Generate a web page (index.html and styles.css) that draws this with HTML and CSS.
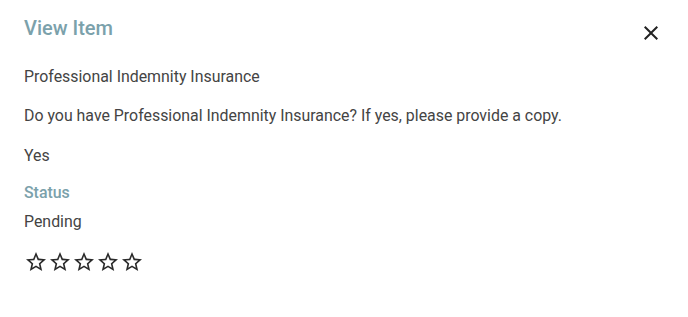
FILE: index.html
```html
<!DOCTYPE html>
<html>
<head>
<meta charset="utf-8">
<link rel="stylesheet" href="styles.css">
</head>
<body>
<div class="dialog">
  <div class="header">
    <h2 class="title">View Item</h2>
    <button class="close" aria-label="Close">
      <svg viewBox="0 0 24 24" width="24" height="24"><path d="M19 6.41 17.59 5 12 10.59 6.41 5 5 6.41 10.59 12 5 17.59 6.41 19 12 13.41 17.59 19 19 17.59 13.41 12z" fill="#222"/></svg>
    </button>
  </div>
  <p class="text t1">Professional Indemnity Insurance</p>
  <p class="text t2">Do you have Professional Indemnity Insurance? If yes, please provide a copy.</p>
  <p class="text t3">Yes</p>
  <p class="label">Status</p>
  <p class="text t4">Pending</p>
  <div class="stars">
    <svg class="star" viewBox="0 0 24 24"><path d="M22 9.24l-7.19-.62L12 2 9.19 8.63 2 9.24l5.46 4.73L5.82 21 12 17.27 18.18 21l-1.63-7.03L22 9.24zM12 15.4l-3.76 2.27 1-4.28-3.32-2.88 4.38-.38L12 6.1l1.71 4.04 4.38.38-3.32 2.88 1 4.28L12 15.4z"/></svg>
    <svg class="star" viewBox="0 0 24 24"><path d="M22 9.24l-7.19-.62L12 2 9.19 8.63 2 9.24l5.46 4.73L5.82 21 12 17.27 18.18 21l-1.63-7.03L22 9.24zM12 15.4l-3.76 2.27 1-4.28-3.32-2.88 4.38-.38L12 6.1l1.71 4.04 4.38.38-3.32 2.88 1 4.28L12 15.4z"/></svg>
    <svg class="star" viewBox="0 0 24 24"><path d="M22 9.24l-7.19-.62L12 2 9.19 8.63 2 9.24l5.46 4.73L5.82 21 12 17.27 18.18 21l-1.63-7.03L22 9.24zM12 15.4l-3.76 2.27 1-4.28-3.32-2.88 4.38-.38L12 6.1l1.71 4.04 4.38.38-3.32 2.88 1 4.28L12 15.4z"/></svg>
    <svg class="star" viewBox="0 0 24 24"><path d="M22 9.24l-7.19-.62L12 2 9.19 8.63 2 9.24l5.46 4.73L5.82 21 12 17.27 18.18 21l-1.63-7.03L22 9.24zM12 15.4l-3.76 2.27 1-4.28-3.32-2.88 4.38-.38L12 6.1l1.71 4.04 4.38.38-3.32 2.88 1 4.28L12 15.4z"/></svg>
    <svg class="star" viewBox="0 0 24 24"><path d="M22 9.24l-7.19-.62L12 2 9.19 8.63 2 9.24l5.46 4.73L5.82 21 12 17.27 18.18 21l-1.63-7.03L22 9.24zM12 15.4l-3.76 2.27 1-4.28-3.32-2.88 4.38-.38L12 6.1l1.71 4.04 4.38.38-3.32 2.88 1 4.28L12 15.4z"/></svg>
  </div>
</div>
</body>
</html>
```

FILE: styles.css
```css
html, body {
  margin: 0;
  padding: 0;
  background: #fff;
}
body {
  font-family: Roboto, "Liberation Sans", sans-serif;
  color: #444;
}
.dialog {
  padding: 16px 24px;
}
.header {
  display: flex;
  justify-content: space-between;
  align-items: flex-start;
}
.title {
  margin: 0;
  font-size: 20px;
  line-height: 24px;
  font-weight: 500;
  color: #7ba1ab;
}
.close {
  width: 40px;
  height: 40px;
  padding: 8px;
  margin: -3px -7px 0 0;
  border: 0;
  background: transparent;
  display: flex;
}
.close svg {
  display: block;
}
.text, .label {
  margin: 0;
  font-size: 15.9px;
  line-height: 20px;
}
.label {
  font-weight: 500;
  color: #7ba1ab;
}
.t1 { margin-top: 14px; }
.t2 { margin-top: 19px; }
.t3 { margin-top: 20px; }
.label { margin-top: 17px; }
.t4 { margin-top: 9px; }
.stars {
  display: flex;
  margin-top: 18px;
}
.star {
  width: 24px;
  height: 24px;
  fill: #2a2a2a;
  display: block;
}
```
